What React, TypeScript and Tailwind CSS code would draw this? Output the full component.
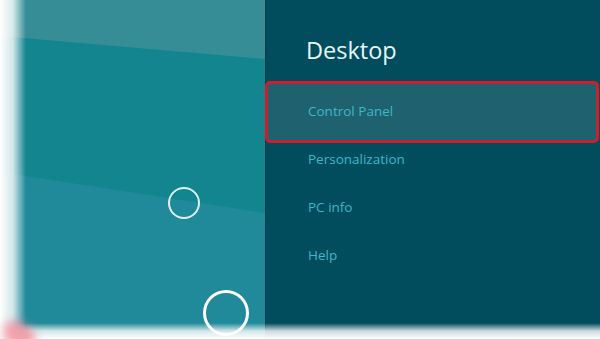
import React from 'react';

const items = ['Control Panel', 'Personalization', 'PC info', 'Help'];

function Wallpaper() {
  return (
    <svg className="absolute inset-0 h-full w-full" viewBox="0 0 266 339" preserveAspectRatio="none">
      <rect width="266" height="339" fill="#20899a" />
      <polygon points="0,0 266,0 266,213 0,172" fill="#13858f" />
      <polygon points="0,0 266,0 266,59 0,36" fill="#368d96" />
    </svg>
  );
}

export default function App() {
  return (
    <div
      className="relative flex h-[339px] w-[600px] overflow-hidden bg-white"
      style={{ fontFamily: '"Open Sans", "Noto Sans", sans-serif' }}
    >
      {/* left: desktop wallpaper */}
      <div className="relative h-full w-[265px] shrink-0">
        <Wallpaper />
        <div className="absolute left-[168px] top-[187px] h-[32px] w-[32px] rounded-full border-2 border-[#d9f3f3]" />
        <div className="absolute left-[203px] top-[290px] h-[46px] w-[46px] rounded-full border-[3px] border-white" />
      </div>

      {/* right: charm menu */}
      <div className="flex h-full flex-1 flex-col border-l border-[#0a3a45] bg-[#014c5d]">
        <h1 className="pl-[40px] pt-[35px] text-[23.5px] leading-[30px] text-[#e7f5f5]">Desktop</h1>
        <ul className="mt-[22px] flex flex-col">
          {items.map((item, i) => (
            <li key={item} className="relative flex h-12 items-center pl-[42px] text-[13.5px] text-[#3db8c8]">
              {i === 0 && (
                <div className="absolute -bottom-[8px] -left-px -top-[6px] right-[1px] rounded-[5px] border-[3px] border-[#cc1f2b] bg-[#20616f]" />
              )}
              <span className="relative">{item}</span>
            </li>
          ))}
        </ul>
      </div>

      {/* photo edges */}
      <div className="pointer-events-none absolute bottom-0 left-0 top-0 w-[26px] bg-gradient-to-r from-white via-white/80 to-transparent" />
      <div className="pointer-events-none absolute bottom-0 left-0 right-0 h-[16px] bg-gradient-to-t from-white via-white/80 to-transparent" />
      <div className="pointer-events-none absolute bottom-[-8px] left-[2px] h-[24px] w-[34px] rotate-[30deg] rounded-full bg-[#f07c8c]/70 blur-[5px]" />
    </div>
  );
}
